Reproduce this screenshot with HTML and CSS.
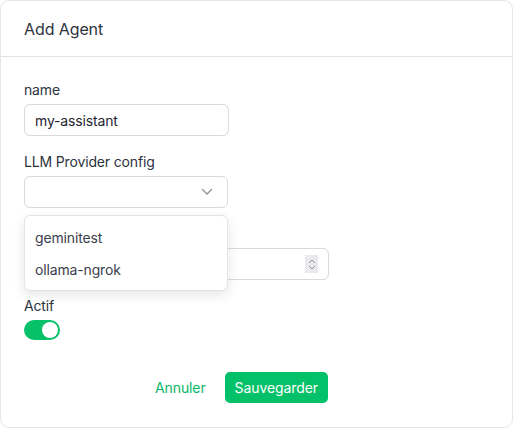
FILE: index.html
```html
<!DOCTYPE html>
<html lang="en">
<head>
<meta charset="utf-8">
<title>Add Agent</title>
<link rel="stylesheet" href="styles.css">
</head>
<body>
<div class="modal">
  <div class="modal-header">Add Agent</div>
  <form class="modal-body">
    <div class="field">
      <label class="label">name</label>
      <div class="input input-name">my-assistant</div>
    </div>
    <div class="field field-select">
      <label class="label">LLM Provider config</label>
      <div class="input input-select">
        <svg class="chevron" width="12" height="8" viewBox="0 0 12 8"><path d="M1.5 1.5 L6 6 L10.5 1.5" fill="none" stroke="#8a8f99" stroke-width="1.3" stroke-linecap="round" stroke-linejoin="round"/></svg>
      </div>
      <ul class="menu">
        <li class="menu-item">geminitest</li>
        <li class="menu-item">ollama-ngrok</li>
      </ul>
    </div>
    <div class="field">
      <label class="label label-covered">temperature</label>
      <div class="input input-number">
        <span class="spinner">
          <svg width="12" height="17" viewBox="0 0 12 17"><path d="M3.5 6.5 L6 4 L8.5 6.5 M3.5 10.5 L6 13 L8.5 10.5" fill="none" stroke="#8e8e99" stroke-width="1" stroke-linecap="round" stroke-linejoin="round"/></svg>
        </span>
      </div>
    </div>
    <div class="field">
      <label class="label">Actif</label>
      <span class="toggle"><span class="knob"></span></span>
    </div>
    <div class="footer">
      <button type="button" class="btn btn-link">Annuler</button>
      <button type="button" class="btn btn-primary">Sauvegarder</button>
    </div>
  </form>
</div>
</body>
</html>
```

FILE: styles.css
```css
* { box-sizing: border-box; }
html, body { margin: 0; padding: 0; }
body {
  background: #ffffff;
  font-family: "Inter", "Liberation Sans", sans-serif;
  color: #2c3340;
}
.modal {
  width: 513px;
  height: 428px;
  border: 1px solid #e6e6e6;
  border-radius: 9px;
  background: #fff;
  display: flex;
  flex-direction: column;
}
.modal-header {
  height: 56px;
  border-bottom: 1px solid #e2e2e2;
  padding: 0 23px;
  display: flex;
  align-items: center;
  font-size: 16px;
  color: #2e3440;
  letter-spacing: -0.1px;
}
.modal-body {
  padding: 23px 23px 23px;
  display: flex;
  flex-direction: column;
  gap: 16px;
  margin: 0;
}
.field {
  display: flex;
  flex-direction: column;
  gap: 4px;
  position: relative;
}
.label {
  font-size: 14px;
  line-height: 20px;
  color: #2c3340;
  letter-spacing: -0.15px;
}
.label-covered { visibility: hidden; }
.input {
  height: 32px;
  border: 1px solid #d9d9de;
  border-radius: 6px;
  background: #fff;
  font-size: 14px;
  color: #1f2530;
  display: flex;
  align-items: center;
  padding: 0 10px;
  letter-spacing: -0.15px;
}
.input-name { width: 205px; }
.input-select {
  width: 204px;
  justify-content: flex-end;
  padding-right: 14px;
}
.chevron { display: block; }
.input-number {
  width: 305px;
  justify-content: flex-end;
  padding-right: 10px;
}
.spinner {
  width: 13px;
  height: 18px;
  background: #e9e9ee;
  display: flex;
  align-items: center;
  justify-content: center;
}
.menu {
  position: absolute;
  left: 0;
  top: 63px;
  width: 204px;
  margin: 0;
  padding: 5px 0;
  list-style: none;
  background: #fff;
  border: 1px solid #e4e4e7;
  border-radius: 6px;
  box-shadow: 0 4px 12px rgba(0, 0, 0, 0.10);
  z-index: 5;
}
.menu-item {
  height: 32px;
  display: flex;
  align-items: center;
  padding: 0 10px;
  font-size: 14px;
  color: #3a404c;
  letter-spacing: -0.15px;
}
.toggle {
  width: 36px;
  height: 20px;
  border-radius: 10px;
  background: #07c168;
  display: flex;
  align-items: center;
  justify-content: flex-end;
  padding: 2px;
}
.knob {
  width: 16px;
  height: 16px;
  border-radius: 50%;
  background: #fff;
}
.footer {
  display: flex;
  align-items: center;
  gap: 9px;
  padding-left: 121px;
  margin-top: 16px;
}
.btn {
  font-family: inherit;
  font-size: 14px;
  height: 31px;
  border-radius: 5px;
  border: none;
  padding: 0 10px;
  cursor: pointer;
  letter-spacing: -0.1px;
}
.btn-link {
  background: transparent;
  color: #0ab765;
}
.btn-primary {
  background: #03c168;
  color: #fff;
  padding: 0 10px;
}
```
